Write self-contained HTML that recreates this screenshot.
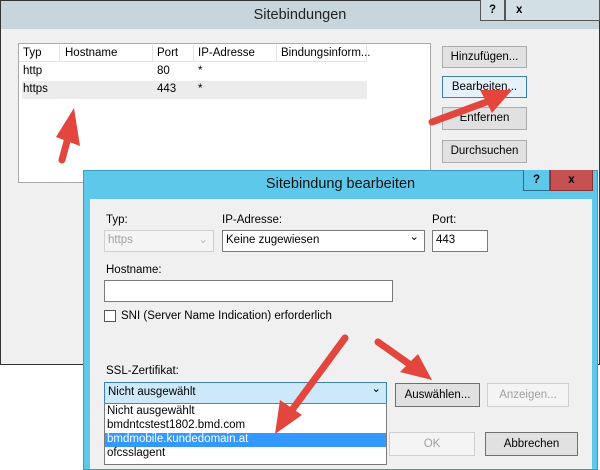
<!DOCTYPE html>
<html><head><style>
*{box-sizing:border-box;margin:0;padding:0}
body{width:600px;height:463px;overflow:hidden;background:#fff;font-family:"Liberation Sans",sans-serif;font-size:11.5px;color:#000;position:relative}
.a{position:absolute}
.btn{position:absolute;background:#e1e1e1;border:1px solid #adadad;text-align:center;line-height:20px}
.in{position:absolute;background:#fff;border:1px solid #abadb3;padding-left:3px;line-height:19px}
.dis{color:#a0a0a0;border-color:#d0d0d0;background:#f4f4f4}
</style></head><body>
<div class="a" style="left:0;top:0;width:600px;height:365px;background:#f0f0f0;border:1px solid #333"></div>
<div class="a" style="left:1px;top:1px;width:598px;height:28px;background:#c7d6dd"></div>
<div class="a" style="left:0;top:7px;width:600px;text-align:center;font-size:14.5px;color:#222">Sitebindungen</div>
<div class="a" style="left:480px;top:0;width:25px;height:21px;border:1px solid #555;border-top:none;background:#d2dfe4;text-align:center;font-weight:bold;line-height:20px">?</div>
<div class="a" style="left:505px;top:0;width:95px;height:21px;border:1px solid #555;border-top:none;background:#d2dfe4;padding-left:10px;font-weight:bold;line-height:20px">x</div>
<div class="a" style="left:18px;top:43px;width:413px;height:140px;background:#fff;border:1px solid #aaa"></div>
<div class="a" style="left:19px;top:44px;width:347px;height:18px;background:#fff;border-bottom:1px solid #e5e5e5"></div>
<div class="a" style="left:59px;top:45px;width:1px;height:17px;background:#e5e5e5"></div>
<div class="a" style="left:152px;top:45px;width:1px;height:17px;background:#e5e5e5"></div>
<div class="a" style="left:193px;top:45px;width:1px;height:17px;background:#e5e5e5"></div>
<div class="a" style="left:276px;top:45px;width:1px;height:17px;background:#e5e5e5"></div>
<div class="a" style="left:366px;top:45px;width:1px;height:17px;background:#e5e5e5"></div>
<div class="a" style="left:23px;top:47px">Typ</div>
<div class="a" style="left:65px;top:47px">Hostname</div>
<div class="a" style="left:157px;top:47px">Port</div>
<div class="a" style="left:198px;top:47px">IP-Adresse</div>
<div class="a" style="left:281px;top:47px">Bindungsinform...</div>
<div class="a" style="left:22px;top:81px;width:345px;height:18px;background:#ececec"></div>
<div class="a" style="left:23px;top:65px">http</div>
<div class="a" style="left:157px;top:65px">80</div>
<div class="a" style="left:198px;top:65px">*</div>
<div class="a" style="left:23px;top:83px">https</div>
<div class="a" style="left:157px;top:83px">443</div>
<div class="a" style="left:198px;top:83px">*</div>
<div class="btn" style="left:442px;top:46px;width:85px;height:22px">Hinzufügen...</div>
<div class="btn" style="left:442px;top:76px;width:85px;height:22px;border-color:#3c7fb1;background:#e5f1fb">Bearbeiten...</div>
<div class="btn" style="left:442px;top:107px;width:85px;height:23px">Entfernen</div>
<div class="btn" style="left:442px;top:140px;width:85px;height:23px">Durchsuchen</div>
<div class="a" style="left:83px;top:170px;width:515px;height:300px;background:#5ec8ea;border:1px solid #3a9cc0"></div>
<div class="a" style="left:83px;top:176px;width:515px;text-align:center;font-size:14.5px;color:#111">Sitebindung bearbeiten</div>
<div class="a" style="left:523px;top:170px;width:27px;height:21px;border:1px solid #2a6f8a;border-top:none;background:#5ec8ea;text-align:center;font-weight:bold;line-height:20px">?</div>
<div class="a" style="left:550px;top:170px;width:43px;height:21px;background:#c75050;border:1px solid #8a3030;border-top:none;text-align:center;font-weight:bold;line-height:20px">x</div>
<div class="a" style="left:90px;top:199px;width:502px;height:270px;background:#f0f0f0"></div>
<div class="a" style="left:106px;top:214px">Typ:</div>
<div class="a" style="left:222px;top:214px">IP-Adresse:</div>
<div class="a" style="left:432px;top:214px">Port:</div>
<div class="in dis" style="left:104px;top:230px;width:110px;height:22px">https<span style="position:absolute;right:5px;color:#bbb">⌄</span></div>
<div class="in" style="left:222px;top:230px;width:203px;height:22px;border-color:#7a7a7a">Keine zugewiesen<span style="position:absolute;right:5px;top:-3px">⌄</span></div>
<div class="in" style="left:432px;top:230px;width:56px;height:22px;border-color:#7a7a7a">443</div>
<div class="a" style="left:106px;top:264px">Hostname:</div>
<div class="in" style="left:104px;top:280px;width:289px;height:22px;border-color:#7a7a7a"></div>
<div class="a" style="left:104px;top:310px;width:12px;height:12px;background:#fff;border:1px solid #555"></div>
<div class="a" style="left:121px;top:310px">SNI (Server Name Indication) erforderlich</div>
<div class="a" style="left:106px;top:365px">SSL-Zertifikat:</div>
<div class="in" style="left:104px;top:382px;width:283px;height:22px;background:#cde8f8;border-color:#3c7fb1">Nicht ausgewählt<span style="position:absolute;right:5px;top:-3px">⌄</span></div>
<div class="a" style="left:104px;top:403px;width:283px;height:62px;background:#fff;border:1px solid #7a7a7a"></div>
<div class="a" style="left:105px;top:433px;width:281px;height:14px;background:#3399ff"></div>
<div class="a" style="left:107px;top:404px;line-height:14px">Nicht ausgewählt<br>bmdntcstest1802.bmd.com<br><span style="color:#fff">bmdmobile.kundedomain.at</span><br>ofcsslagent</div>
<div class="btn" style="left:395px;top:383px;width:85px;height:24px;border-color:#707070;line-height:22px">Auswählen...</div>
<div class="btn dis" style="left:487px;top:383px;width:82px;height:24px;line-height:22px">Anzeigen...</div>
<div class="btn dis" style="left:389px;top:432px;width:86px;height:24px;line-height:22px">OK</div>
<div class="btn" style="left:485px;top:432px;width:93px;height:24px;border-color:#707070;line-height:22px">Abbrechen</div>
<svg class="a" style="left:0;top:0" width="600" height="463">
<g stroke="#e2463d" stroke-width="7" stroke-linecap="round" fill="#e2463d">
<line x1="62" y1="160" x2="70" y2="130"/>
<line x1="432" y1="122" x2="492" y2="100"/>
<line x1="345" y1="338" x2="292" y2="410"/>
<line x1="378" y1="342" x2="412" y2="366"/>
</g>
<g fill="#e2463d">
<polygon points="56,137 74,108 80,146"/>
<polygon points="512,90 480,90 492,113"/>
<polygon points="275,434 280,400 302,415"/>
<polygon points="432,380 400,372 418,354"/>
</g>
</svg>
</body></html>
